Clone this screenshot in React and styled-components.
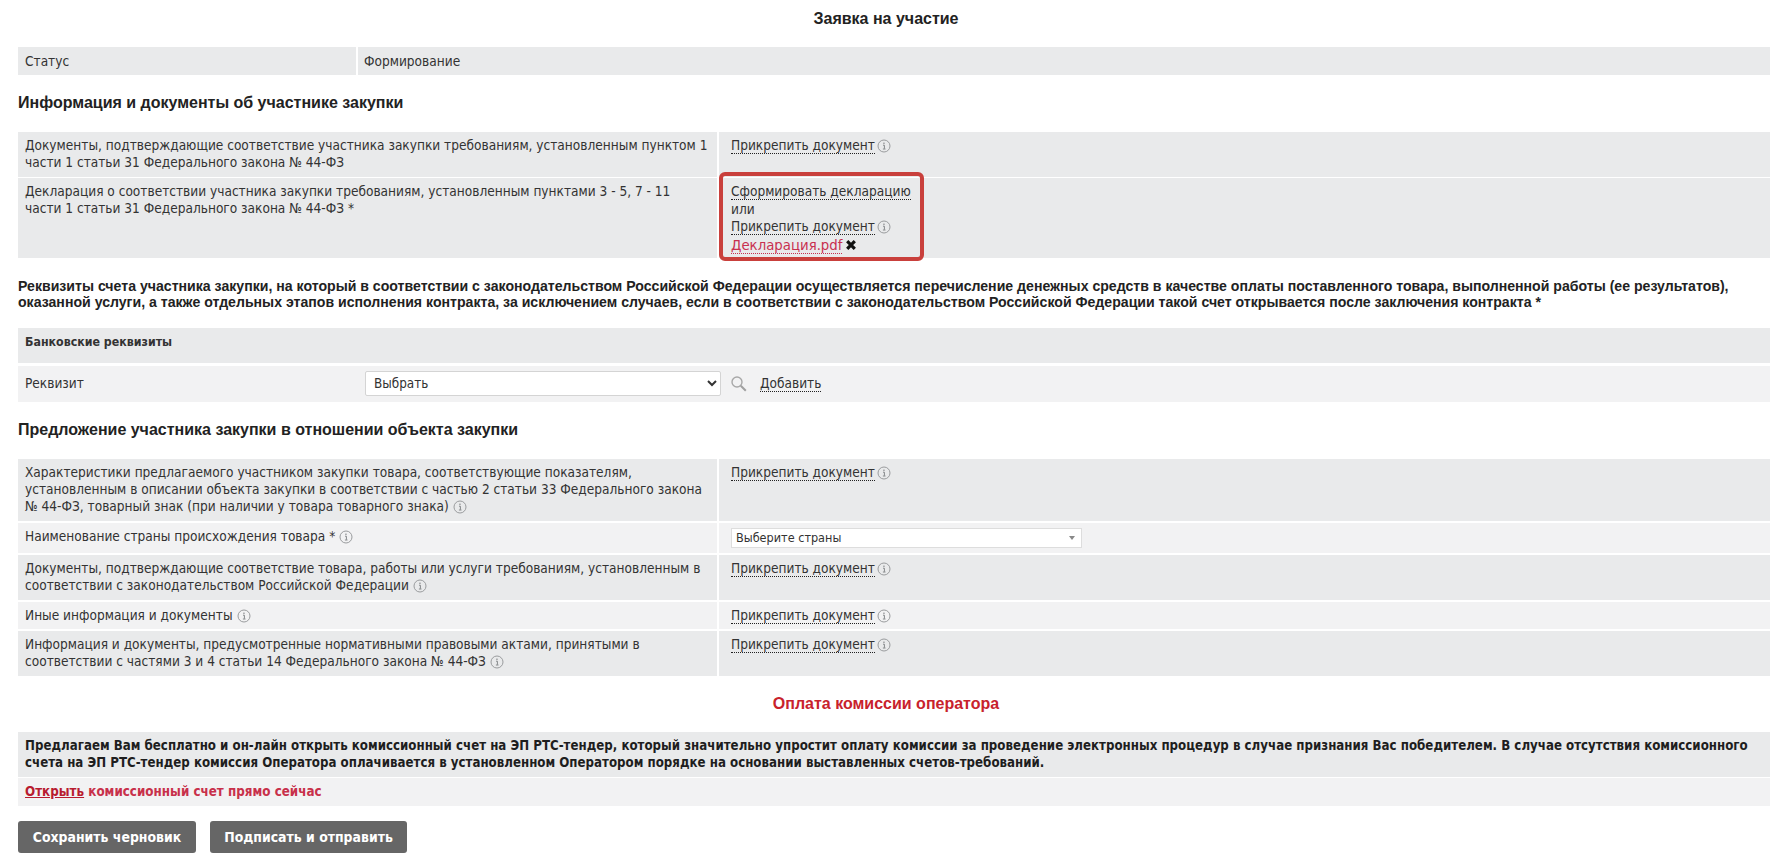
import React from 'react';
import styled, { createGlobalStyle } from 'styled-components';

const GlobalStyle = createGlobalStyle`
  html, body {
    margin: 0;
    padding: 0;
    background: #fff;
  }
  body {
    font-family: "DejaVu Sans Condensed", "DejaVu Sans", sans-serif;
    font-size: 13.57px;
    color: #333;
  }
`;

const Page = styled.div`
  box-sizing: border-box;
  width: 1788px;
  height: 860px;
  overflow: hidden;
  padding: 0 18px;
`;

const Title = styled.h1`
  margin: 0 16px 9px 0;
  font: bold 16px/38px "Liberation Sans", Arial, sans-serif;
  color: #222;
  text-align: center;
`;

const StatusRow = styled.div`
  display: grid;
  grid-template-columns: 338px 1fr;
  column-gap: 2px;
  height: 28px;
  line-height: 28px;
  background: #fff;
`;

const StatusCell = styled.div`
  background: #e9eaeb;
  padding-left: ${p => p.$pad}px;
`;

const Heading = styled.h2`
  margin: 18px 0 19px;
  font: bold 16px/20px "Liberation Sans", Arial, sans-serif;
  color: #222;
`;

const Table = styled.div`
  display: flex;
  flex-direction: column;
  gap: ${p => p.$gap}px;
`;

const Row = styled.div`
  display: grid;
  grid-template-columns: 699px 1fr;
  column-gap: 2px;
  height: ${p => p.$h}px;
`;

const Cell = styled.div`
  position: relative;
  box-sizing: border-box;
  background: ${p => (p.$light ? '#f2f2f3' : '#e9eaeb')};
  padding: 5px 8px 0 7px;
  line-height: 17px;
`;

const ActionCell = styled(Cell)`
  padding-left: 12px;
  line-height: 17.5px;
`;

const Highlight = styled.div`
  position: absolute;
  top: -6px;
  bottom: -3px;
  left: 0;
  width: 205px;
  box-sizing: border-box;
  border: 4px solid #c9403c;
  border-radius: 6px;
  pointer-events: none;
`;

const DocLink = styled.a`
  color: ${p => p.$color || '#333'};
  border-bottom: 1px dotted ${p => p.$color || '#222'};
  font-size: ${p => p.$size || 13.57}px;
  cursor: pointer;
`;

const InfoMark = styled.svg`
  width: 14px;
  height: 14px;
  margin-left: ${p => p.$gap}px;
  vertical-align: -3px;
`;

const Info = ({ gap = 4 }) => (
  <InfoMark $gap={gap} viewBox="0 0 14 14" fill="none">
    <circle cx="7" cy="7" r="6" stroke="#9a9c9e" strokeWidth="1" />
    <path d="M6 6.2h1.4v3.6M5.9 10h2.6" stroke="#85888a" strokeWidth="1" />
    <rect x="6.3" y="3.6" width="1.3" height="1.3" fill="#85888a" />
  </InfoMark>
);

const RemoveMark = styled.svg`
  width: 12px;
  height: 12px;
  margin-left: 3px;
  vertical-align: -1px;
`;

const Remove = () => (
  <RemoveMark viewBox="0 0 12 12">
    <path d="M2.2 2.2l7.6 7.6M9.8 2.2l-7.6 7.6" stroke="#111" strokeWidth="3.2" />
  </RemoveMark>
);

const Attach = () => (
  <>
    <DocLink>Прикрепить документ</DocLink>
    <Info gap={2} />
  </>
);

const Requisites = styled.p`
  margin: 20px 0 18px;
  font: bold 14.11px/16px "Liberation Sans", Arial, sans-serif;
  color: #222;
`;

const BankHead = styled.div`
  box-sizing: border-box;
  height: 35px;
  padding: 6px 7px 0;
  background: #e9eaeb;
  font-size: 12.3px;
  font-weight: bold;
  line-height: 17px;
`;

const BankRow = styled.div`
  box-sizing: border-box;
  display: flex;
  align-items: center;
  height: 36px;
  margin-top: 3px;
  padding: 0 0 1px 7px;
  background: #f2f2f3;
`;

const BankLabel = styled.div`
  width: 340px;
  margin-bottom: 1px;
`;

const BankSelect = styled.select`
  box-sizing: border-box;
  width: 356px;
  height: 25px;
  padding-left: 4px;
  border: 1px solid #d4d4d4;
  border-radius: 2px;
  background: #fff;
  color: #333;
  font: 13.4px "DejaVu Sans Condensed", sans-serif;
`;

const SearchMark = styled.svg`
  width: 17px;
  height: 17px;
  margin: 0 13px 0 9px;
`;

const Country = styled.div`
  position: relative;
  box-sizing: border-box;
  width: 351px;
  height: 20px;
  padding-left: 4px;
  border: 1px solid #ddd;
  background: #fff;
  font-size: 12.55px;
  line-height: 18px;

  &::after {
    content: '';
    position: absolute;
    right: 6px;
    top: 7px;
    border-style: solid;
    border-width: 4px 3.5px 0;
    border-color: #888 transparent transparent;
  }
`;

const Fee = styled.h3`
  margin: 18px 16px 18px 0;
  font: bold 16px/20px "Liberation Sans", Arial, sans-serif;
  color: #c8222c;
  text-align: center;
`;

const OfferText = styled.div`
  box-sizing: border-box;
  height: 45px;
  padding: 5px 7px 0;
  background: #e9eaeb;
  color: #1e1e1e;
  font-size: 13.18px;
  font-weight: bold;
  line-height: 17px;
`;

const OpenRow = styled.div`
  box-sizing: border-box;
  height: 28px;
  margin-top: 1px;
  padding: 5px 7px 0;
  background: #f2f2f3;
  color: #c8304a;
  font-size: 13.3px;
  font-weight: bold;
  line-height: 17px;
`;

const OpenLink = styled.a`
  color: #b81c30;
  text-decoration: underline;
  cursor: pointer;
`;

const Buttons = styled.div`
  display: flex;
  gap: 14px;
  margin-top: 15px;
`;

const Button = styled.button`
  box-sizing: border-box;
  width: ${p => p.$w}px;
  height: 32px;
  border: 0;
  border-radius: 3px;
  background: #666;
  color: #fff;
  font: bold 13.9px "DejaVu Sans Condensed", sans-serif;
  cursor: pointer;
`;

const App = () => (
  <Page>
    <GlobalStyle />
    <Title>Заявка на участие</Title>
    <StatusRow>
      <StatusCell $pad={7}>Статус</StatusCell>
      <StatusCell $pad={6}>Формирование</StatusCell>
    </StatusRow>

    <Heading>Информация и документы об участнике закупки</Heading>
    <Table $gap={1}>
      <Row $h={45}>
        <Cell>Документы, подтверждающие соответствие участника закупки требованиям, установленным пунктом 1 части 1 статьи 31 Федерального закона № 44-ФЗ</Cell>
        <ActionCell><Attach /></ActionCell>
      </Row>
      <Row $h={80}>
        <Cell>Декларация о соответствии участника закупки требованиям, установленным пунктами 3 - 5, 7 - 11<br />части 1 статьи 31 Федерального закона № 44-ФЗ *</Cell>
        <ActionCell>
          <DocLink>Сформировать декларацию</DocLink>
          <br />или<br />
          <Attach />
          <br />
          <DocLink $color="#c8304f" $size={14.8}>Декларация.pdf</DocLink>
          <Remove />
          <Highlight />
        </ActionCell>
      </Row>
    </Table>

    <Requisites>
      Реквизиты счета участника закупки, на который в соответствии с законодательством Российской Федерации осуществляется перечисление денежных средств в качестве оплаты поставленного товара, выполненной работы (ее результатов), оказанной услуги, а также отдельных этапов исполнения контракта, за исключением случаев, если в соответствии с законодательством Российской Федерации такой счет открывается после заключения контракта *
    </Requisites>

    <BankHead>Банковские реквизиты</BankHead>
    <BankRow>
      <BankLabel>Реквизит</BankLabel>
      <BankSelect defaultValue="">
        <option value="">Выбрать</option>
      </BankSelect>
      <SearchMark viewBox="0 0 17 17" fill="none">
        <circle cx="7" cy="7" r="5" stroke="#a8a8a8" strokeWidth="1.4" />
        <path d="M10.8 10.8l5 5" stroke="#a0a0a0" strokeWidth="2" />
      </SearchMark>
      <DocLink>Добавить</DocLink>
    </BankRow>

    <Heading>Предложение участника закупки в отношении объекта закупки</Heading>
    <Table $gap={2}>
      <Row $h={62}>
        <Cell>Характеристики предлагаемого участником закупки товара, соответствующие показателям,<br />установленным в описании объекта закупки в соответствии с частью 2 статьи 33 Федерального закона<br />№ 44-ФЗ, товарный знак (при наличии у товара товарного знака)<Info /></Cell>
        <ActionCell><Attach /></ActionCell>
      </Row>
      <Row $h={30}>
        <Cell $light>Наименование страны происхождения товара *<Info /></Cell>
        <ActionCell $light><Country>Выберите страны</Country></ActionCell>
      </Row>
      <Row $h={45}>
        <Cell>Документы, подтверждающие соответствие товара, работы или услуги требованиям, установленным в соответствии с законодательством Российской Федерации<Info /></Cell>
        <ActionCell><Attach /></ActionCell>
      </Row>
      <Row $h={27}>
        <Cell $light>Иные информация и документы<Info /></Cell>
        <ActionCell $light><Attach /></ActionCell>
      </Row>
      <Row $h={45}>
        <Cell>Информация и документы, предусмотренные нормативными правовыми актами, принятыми в соответствии с частями 3 и 4 статьи 14 Федерального закона № 44-ФЗ<Info /></Cell>
        <ActionCell><Attach /></ActionCell>
      </Row>
    </Table>

    <Fee>Оплата комиссии оператора</Fee>
    <OfferText>
      Предлагаем Вам бесплатно и он-лайн открыть комиссионный счет на ЭП РТС-тендер, который значительно упростит оплату комиссии за проведение электронных процедур в случае признания Вас победителем. В случае отсутствия комиссионного счета на ЭП РТС-тендер комиссия Оператора оплачивается в установленном Оператором порядке на основании выставленных счетов-требований.
    </OfferText>
    <OpenRow><OpenLink>Открыть</OpenLink> комиссионный счет прямо сейчас</OpenRow>

    <Buttons>
      <Button $w={178}>Сохранить черновик</Button>
      <Button $w={197}>Подписать и отправить</Button>
    </Buttons>
  </Page>
);

export default App;
